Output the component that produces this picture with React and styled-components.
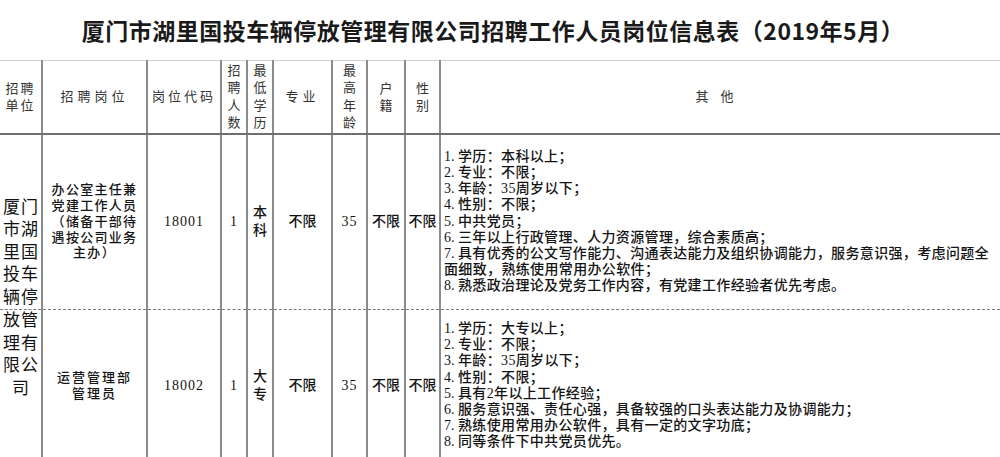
import React from "react";
import styled, { createGlobalStyle, css } from "styled-components";

const GlobalStyle = createGlobalStyle`
  html, body { margin: 0; padding: 0; background: #fff; }
  body { overflow: hidden; }
`;

const SERIF = `"Liberation Serif", "Noto Sans CJK SC", serif`;
const SANS = `"Noto Sans CJK SC", sans-serif`;
const LINE = "#8c8c8c";

const Page = styled.div`
  width: 1000px;
  background: #fff;
`;

const TitleBar = styled.h1`
  margin: 0;
  height: 60px;
  display: flex;
  align-items: center;
  justify-content: center;
  padding-right: 14px;
  box-sizing: border-box;
  font-family: ${SANS};
  font-size: 23px;
  font-weight: 700;
  letter-spacing: 0.5px;
  color: #1a1a1a;
`;

const Sheet = styled.table`
  width: 1000px;
  table-layout: fixed;
  border-collapse: collapse;
  font-family: ${SERIF};
`;

const Row = styled.tr`
  height: ${(p) => p.$h}px;
`;

const HeadCell = styled.th`
  padding: 0;
  font-weight: 400;
  font-size: 13px;
  line-height: ${(p) => p.$lh || 17}px;
  letter-spacing: ${(p) => p.$ls || 0}px;
  color: #333;
  text-align: center;
  vertical-align: middle;
  overflow: hidden;
  white-space: nowrap;
  border-top: 1px solid #cfcfcf;
  border-bottom: 2px solid #6f6f6f;
  border-right: 2px solid ${LINE};
  &:last-child { border-right: none; }
`;

const Cell = styled.td`
  padding: 0;
  font-size: 14px;
  font-weight: 500;
  line-height: 18px;
  color: #141414;
  text-align: center;
  vertical-align: middle;
  overflow: hidden;
  white-space: nowrap;
  border-right: 2px solid ${LINE};
  border-bottom: ${(p) => (p.$dashed ? `1px dashed #7a7a7a` : "none")};
  &:last-child { border-right: none; }
  ${(p) =>
    p.$num &&
    css`
      font-weight: 400;
      letter-spacing: 1px;
    `}
`;

const UnitCell = styled(Cell)`
  font-size: 17px;
  font-weight: 400;
  line-height: 22.5px;
  letter-spacing: 1px;
  padding-left: 1px;
  vertical-align: ${(p) => p.$align};
  color: #111;
`;

const PostCell = styled(Cell)`
  font-size: 13px;
  line-height: 15.8px;
  letter-spacing: ${(p) => p.$ls}px;
  white-space: normal;
`;

const ListCell = styled(Cell)`
  text-align: left;
  padding-left: 3px;
  font-size: 14px;
  line-height: 16.2px;
  letter-spacing: 0.35px;
`;

const Item = styled.div`
  white-space: nowrap;
`;

const ItemNo = styled.span`
  font-family: "Liberation Serif", serif;
  font-weight: 400;
  letter-spacing: 0;
`;

const cols = [42, 105, 74, 26, 26, 59, 35, 38, 35, 560];

const list1 = [
  "学历：本科以上；",
  "专业：不限；",
  "年龄：35周岁以下；",
  "性别：不限；",
  "中共党员；",
  "三年以上行政管理、人力资源管理，综合素质高；",
  ["具有优秀的公文写作能力、沟通表达能力及组织协调能力，服务意识强，考虑问题全", "面细致，熟练使用常用办公软件；"],
  "熟悉政治理论及党务工作内容，有党建工作经验者优先考虑。",
];

const list2 = [
  "学历：大专以上；",
  "专业：不限；",
  "年龄：35周岁以下；",
  "性别：不限；",
  "具有2年以上工作经验；",
  "服务意识强、责任心强，具备较强的口头表达能力及协调能力；",
  "熟练使用常用办公软件，具有一定的文字功底；",
  "同等条件下中共党员优先。",
];

const Stack = ({ chars }) =>
  chars.split("").map((c, i) => (
    <React.Fragment key={i}>
      {i > 0 && <br />}
      {c}
    </React.Fragment>
  ));

const Lines = ({ lines }) =>
  lines.map((l, i) => (
    <React.Fragment key={i}>
      {i > 0 && <br />}
      {l}
    </React.Fragment>
  ));

const Requirements = ({ items }) =>
  items.map((it, i) => {
    const parts = Array.isArray(it) ? it : [it];
    return (
      <React.Fragment key={i}>
        <Item>
          <ItemNo>{i + 1}. </ItemNo>
          {parts[0]}
        </Item>
        {parts.slice(1).map((p, j) => (
          <Item key={j}>{p}</Item>
        ))}
      </React.Fragment>
    );
  });

export default function App() {
  return (
    <Page>
      <GlobalStyle />
      <TitleBar>厦门市湖里国投车辆停放管理有限公司招聘工作人员岗位信息表（2019年5月）</TitleBar>
      <Sheet>
        <colgroup>
          {cols.map((w, i) => (
            <col key={i} style={{ width: w }} />
          ))}
        </colgroup>
        <thead>
          <Row $h={73}>
            <HeadCell $ls={2}>
              <Lines lines={["招聘", "单位"]} />
            </HeadCell>
            <HeadCell $ls={4}>招聘岗位</HeadCell>
            <HeadCell $ls={3}>岗位代码</HeadCell>
            <HeadCell $lh={17.5}>
              <Stack chars="招聘人数" />
            </HeadCell>
            <HeadCell $lh={17.5}>
              <Stack chars="最低学历" />
            </HeadCell>
            <HeadCell $ls={4}>专业</HeadCell>
            <HeadCell $lh={17.5}>
              <Stack chars="最高年龄" />
            </HeadCell>
            <HeadCell $lh={17}>
              <Stack chars="户籍" />
            </HeadCell>
            <HeadCell $lh={17}>
              <Stack chars="性别" />
            </HeadCell>
            <HeadCell $ls={12}>其他</HeadCell>
          </Row>
        </thead>
        <tbody>
          <Row $h={176}>
            <UnitCell $dashed $align="bottom">
              <Lines lines={["厦门", "市湖", "里国", "投车", "辆停"]} />
            </UnitCell>
            <PostCell $dashed $ls={1.3}>
              <Lines lines={["办公室主任兼", "党建工作人员", "（储备干部待", "遇按公司业务", "主办）"]} />
            </PostCell>
            <Cell $dashed $num>18001</Cell>
            <Cell $dashed $num>1</Cell>
            <Cell $dashed>
              <Stack chars="本科" />
            </Cell>
            <Cell $dashed>不限</Cell>
            <Cell $dashed $num>35</Cell>
            <Cell $dashed>不限</Cell>
            <Cell $dashed>不限</Cell>
            <ListCell $dashed>
              <Requirements items={list1} />
            </ListCell>
          </Row>
          <Row $h={152}>
            <UnitCell $align="top">
              <Lines lines={["放管", "理有", "限公", "司"]} />
            </UnitCell>
            <PostCell $ls={2}>
              <Lines lines={["运营管理部", "管理员"]} />
            </PostCell>
            <Cell $num>18002</Cell>
            <Cell $num>1</Cell>
            <Cell>
              <Stack chars="大专" />
            </Cell>
            <Cell>不限</Cell>
            <Cell $num>35</Cell>
            <Cell>不限</Cell>
            <Cell>不限</Cell>
            <ListCell>
              <Requirements items={list2} />
            </ListCell>
          </Row>
        </tbody>
      </Sheet>
    </Page>
  );
}
